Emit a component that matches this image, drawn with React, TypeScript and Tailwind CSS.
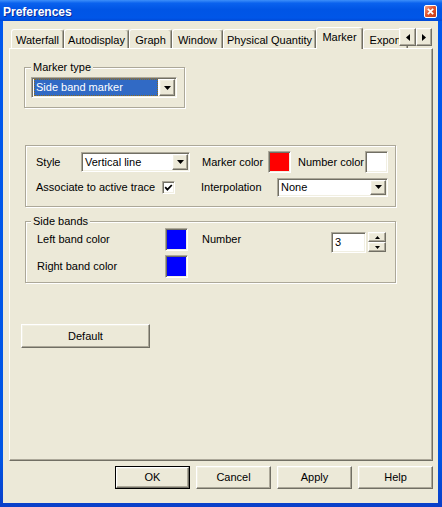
import React from "react";

const raised =
  "border border-t-white border-l-white border-r-[#716F64] border-b-[#716F64] shadow-[inset_-1px_-1px_0_#ACA899,inset_1px_1px_0_#F1EFE2]";
const sunken =
  "border border-t-[#ACA899] border-l-[#ACA899] border-r-white border-b-white shadow-[inset_1px_1px_0_#716F64,inset_-1px_-1px_0_#F1EFE2]";
const groupBox =
  "relative border border-[#ACA899] shadow-[1px_1px_0_#fff,inset_1px_1px_0_#fff]";

function DownTri() {
  return (
    <svg width="7" height="4" viewBox="0 0 7 4">
      <polygon points="0,0 7,0 3.5,4" fill="#000" />
    </svg>
  );
}

function Combo({
  cls,
  text,
  selected,
}: {
  cls: string;
  text: string;
  selected?: boolean;
}) {
  return (
    <div className={`${sunken} ${cls} bg-white p-px flex shrink-0`}>
      <div className="flex-1 flex items-center min-w-0">
        {selected ? (
          <div className="flex-1 h-full m-px bg-[#316AC5] border border-dotted border-[#8a6a20] text-white flex items-center pl-px leading-none">
            {text}
          </div>
        ) : (
          <span className="pl-[2px] leading-none">{text}</span>
        )}
      </div>
      <div className={`${raised} w-[16px] h-full bg-[#ECE9D8] flex items-center justify-center shrink-0`}>
        <DownTri />
      </div>
    </div>
  );
}

function Swatch({ cls, color }: { cls: string; color: string }) {
  return <div className={`${sunken} ${cls} ${color} shrink-0`} />;
}

function Tab({ label, w, sel }: { label: string; w: string; sel?: boolean }) {
  return (
    <div
      className={`relative shrink-0 ${w} flex items-center justify-center bg-[#ECE9D8] border-l border-t border-r border-l-white border-t-white border-r-[#716F64] rounded-tl-[3px] rounded-tr-[3px] shadow-[inset_-1px_0_0_#ACA899] leading-none ${
        sel ? "h-[22px] -mb-px z-10 pb-[2px]" : "h-[19px] pt-[2px]"
      }`}
    >
      {label}
    </div>
  );
}

function Btn({ label, def }: { label: string; def?: boolean }) {
  if (def) {
    return (
      <div className="w-[75px] h-[23px] border border-black flex shrink-0">
        <div className={`${raised} flex-1 flex items-center justify-center bg-[#ECE9D8] leading-none`}>
          {label}
        </div>
      </div>
    );
  }
  return (
    <div className={`${raised} w-[75px] h-[23px] flex items-center justify-center bg-[#ECE9D8] leading-none shrink-0`}>
      {label}
    </div>
  );
}

export default function App() {
  const tabs: [string, string, boolean?][] = [
    ["Waterfall", "w-[53px]"],
    ["Autodisplay", "w-[65px]"],
    ["Graph", "w-[43px]"],
    ["Window", "w-[51px]"],
    ["Physical Quantity", "w-[93px]"],
    ["Marker", "w-[47px]", true],
    ["Export", "w-[45px]"],
  ];
  return (
    <div className="w-[442px] h-[507px] flex flex-col bg-[linear-gradient(to_bottom,#0058ee,#0055e5_90%,#0a3fc8)] font-['Liberation_Sans',Arial,sans-serif] text-[11px] text-black overflow-hidden">
      {/* Title bar */}
      <div className="h-[21px] shrink-0 flex items-center justify-between pl-[3px] pr-[5px] pt-[2px] bg-[linear-gradient(to_bottom,#3d8ff9_0%,#0a62ee_15%,#0055e5_45%,#0056e8_85%,#0049d6_100%)]">
        <span className="text-white font-bold text-[12px] leading-none [text-shadow:1px_1px_0_#0c2a9a]">
          Preferences
        </span>
        <div className="w-[13px] h-[13px] rounded-[2px] border border-white bg-[linear-gradient(135deg,#f3a58a,#e2552f_45%,#c33a18)] flex items-center justify-center">
          <svg width="7" height="7" viewBox="0 0 7 7">
            <path d="M0.8 0.8 L6.2 6.2 M6.2 0.8 L0.8 6.2" stroke="#fff" strokeWidth="1.7" />
          </svg>
        </div>
      </div>

      {/* Client */}
      <div className="flex-1 ml-[3px] mr-[4px] mb-[4px] bg-[#ECE9D8] flex flex-col pt-[6px] pl-[6px] pr-[5px]">
        {/* Tab strip */}
        <div className="relative h-[21px] shrink-0 flex items-end pl-[2px]">
          {tabs.map(([l, w, s]) => (
            <Tab key={l} label={l} w={w} sel={s} />
          ))}
          <div className="absolute right-[1px] top-[1px] flex z-20">
            <div className={`${raised} w-[17px] h-[18px] bg-[#ECE9D8] flex items-center justify-center`}>
              <svg width="4" height="7" viewBox="0 0 4 7">
                <polygon points="4,0 4,7 0,3.5" fill="#000" />
              </svg>
            </div>
            <div className={`${raised} w-[16px] h-[18px] bg-[#ECE9D8] flex items-center justify-center`}>
              <svg width="4" height="7" viewBox="0 0 4 7">
                <polygon points="0,0 0,7 4,3.5" fill="#000" />
              </svg>
            </div>
          </div>
        </div>

        {/* Panel */}
        <div className="h-[413px] shrink-0 flex flex-col items-start border border-l-white border-t-white border-r-[#716F64] border-b-[#716F64] shadow-[inset_-1px_-1px_0_#ACA899]">
          {/* Marker type */}
          <div className={`${groupBox} ml-[14px] mt-[18px] w-[161px] h-[41px] pl-[6px] pt-[9px]`}>
            <span className="absolute left-[6px] top-[-7px] px-[2px] bg-[#ECE9D8] leading-[13px]">
              Marker type
            </span>
            <Combo cls="w-[146px] h-[21px]" text="Side band marker" selected />
          </div>

          {/* Style group */}
          <div className={`${groupBox} ml-[15px] mt-[37px] w-[371px] h-[62px] pl-[10px] pt-[5px] flex flex-col`}>
            <div className="flex items-center h-[22px]">
              <span className="w-[45px] shrink-0">Style</span>
              <Combo cls="w-[109px] h-[20px]" text="Vertical line" />
              <span className="ml-[12px] w-[66px] shrink-0">Marker color</span>
              <Swatch cls="w-[23px] h-[22px]" color="bg-[#FF0000]" />
              <span className="ml-[7px] w-[67px] shrink-0">Number color</span>
              <Swatch cls="w-[23px] h-[22px]" color="bg-white" />
            </div>
            <div className="flex items-center h-[20px] mt-[4px]">
              <span className="w-[126px] shrink-0">Associate to active trace</span>
              <div className={`${sunken} w-[13px] h-[13px] bg-white shrink-0 flex items-center justify-center`}>
                <svg width="9" height="9" viewBox="0 0 9 9">
                  <path d="M1.2 4.2 L3.4 6.6 L7.8 2" stroke="#000" strokeWidth="1.8" fill="none" />
                </svg>
              </div>
              <span className="ml-[26px] w-[76px] shrink-0">Interpolation</span>
              <Combo cls="w-[111px] h-[19px]" text="None" />
            </div>
          </div>

          {/* Side bands */}
          <div className={`${groupBox} ml-[15px] mt-[14px] w-[371px] h-[62px] pl-[11px] pt-[6px] flex flex-col`}>
            <span className="absolute left-[5px] top-[-7px] px-[2px] bg-[#ECE9D8] leading-[13px]">
              Side bands
            </span>
            <div className="flex items-center h-[23px]">
              <span className="w-[128px] shrink-0">Left band color</span>
              <Swatch cls="w-[23px] h-[23px]" color="bg-[#0000FF]" />
              <span className="ml-[14px] w-[129px] shrink-0">Number</span>
              <div className={`${sunken} w-[35px] h-[21px] bg-white self-start mt-[4px] flex items-center pl-[3px] leading-none shrink-0`}>
                3
              </div>
              <div className="ml-[2px] w-[18px] h-[20px] self-start mt-[4px] flex flex-col shrink-0">
                <div className={`${raised} flex-1 bg-[#ECE9D8] flex items-center justify-center`}>
                  <svg width="5" height="3" viewBox="0 0 5 3">
                    <polygon points="0,3 5,3 2.5,0" fill="#000" />
                  </svg>
                </div>
                <div className={`${raised} flex-1 bg-[#ECE9D8] flex items-center justify-center`}>
                  <svg width="5" height="3" viewBox="0 0 5 3">
                    <polygon points="0,0 5,0 2.5,3" fill="#000" />
                  </svg>
                </div>
              </div>
            </div>
            <div className="flex items-center h-[23px] mt-[4px]">
              <span className="w-[128px] shrink-0">Right band color</span>
              <Swatch cls="w-[23px] h-[23px]" color="bg-[#0000FF]" />
            </div>
          </div>

          {/* Default */}
          <div className={`${raised} ml-[11px] mt-[41px] w-[129px] h-[24px] bg-[#ECE9D8] flex items-center justify-center leading-none`}>
            Default
          </div>
        </div>

        {/* Buttons */}
        <div className="mt-[5px] flex justify-end gap-[6px]">
          <Btn label="OK" def />
          <Btn label="Cancel" />
          <Btn label="Apply" />
          <Btn label="Help" />
        </div>
      </div>
    </div>
  );
}
